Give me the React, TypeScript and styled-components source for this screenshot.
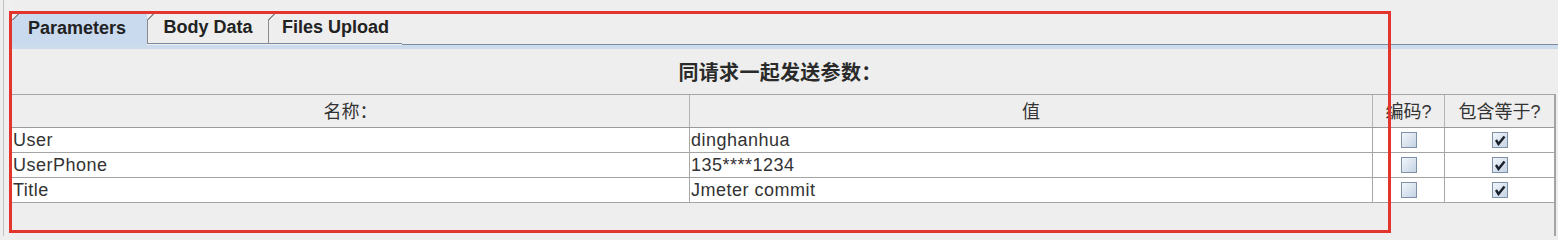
import React from 'react'
import styled, { createGlobalStyle } from 'styled-components'

const GlobalStyle = createGlobalStyle`
  html, body {
    margin: 0;
    padding: 0;
    background: #eeeeee;
  }
  body {
    font-family: "Liberation Sans", "Noto Sans CJK SC", sans-serif;
    color: #222;
  }
`

const columns = '678px 683px 72px 109px'

const Frame = styled.div`
  position: relative;
  width: 1558px;
  height: 236px;
  box-sizing: border-box;
  padding-left: 3px;
  display: flex;
  overflow: hidden;
  background: #eeeeee;
`
const Rail = styled.div`
  width: 8px;
  border-left: 1px solid #c2c2c2;
  background: #efefef;
`
const Panel = styled.div`
  flex: 1;
  display: flex;
  flex-direction: column;
  min-width: 0;
`
const TabStrip = styled.div`
  margin-top: 13px;
  height: 32px;
  display: flex;
  align-items: flex-start;
`
const Tab = styled.div<{ $active?: boolean; $width: number }>`
  position: relative;
  box-sizing: border-box;
  width: ${(p) => p.$width}px;
  height: ${(p) => (p.$active ? 32 : 31)}px;
  display: flex;
  align-items: center;
  justify-content: center;
  padding-right: ${(p) => (p.$active ? 6 : 0)}px;
  padding-bottom: 2px;
  font-size: 18px;
  font-weight: bold;
  color: #222;
  background: ${(p) => (p.$active ? '#c9daee' : '#eeeeee')};
  border-left: 1px solid ${(p) => (p.$active ? '#c9daee' : '#8c8c8c')};
  border-bottom: ${(p) => (p.$active ? 'none' : '1px solid #7b8aa0')};
  &::before {
    content: '';
    position: absolute;
    left: -1px;
    top: 0;
    width: 7px;
    height: 7px;
    background: linear-gradient(135deg, #eeeeee 0 46%, #8c8c8c 46% 58%, transparent 58%);
  }
  &:last-of-type {
    border-right: 1px solid #8c8c8c;
  }
`
const TabFill = styled.div`
  flex: 1;
  height: 31px;
  border-bottom: 1px solid #7b8aa0;
`
const ContentEdge = styled.div`
  height: 4px;
  background: #cddcec;
`
const TitleBand = styled.div`
  height: 45px;
  display: flex;
  align-items: center;
  justify-content: center;
  font-size: 20px;
  font-weight: bold;
  color: #2a2a2a;
  letter-spacing: 0.3px;
  padding-right: 10px;
`
const ScrollPane = styled.div`
  flex: 1;
  margin-right: 2px;
  border-right: 2px solid #a4a4a4;
  border-top: 1px solid #a6a6a6;
`
const HeaderRow = styled.div`
  display: grid;
  grid-template-columns: ${columns};
  height: 32px;
  border-bottom: 1px solid #9a9a9a;
  background: #eeeeee;
`
const HeaderCell = styled.div`
  display: flex;
  align-items: center;
  justify-content: center;
  font-size: 18px;
  color: #333;
  border-right: 1px solid #b4b4b4;
  padding-bottom: 2px;
  &:last-child {
    border-right: none;
  }
`
const Row = styled.div`
  display: grid;
  grid-template-columns: ${columns};
  height: 24px;
  background: #ffffff;
  border-bottom: 1px solid #a4a4a4;
`
const Cell = styled.div<{ $center?: boolean }>`
  display: flex;
  align-items: center;
  justify-content: ${(p) => (p.$center ? 'center' : 'flex-start')};
  padding-left: ${(p) => (p.$center ? 0 : 1)}px;
  font-size: 18px;
  letter-spacing: 0.5px;
  color: #333;
  border-right: 1px solid #a8a8a8;
  white-space: nowrap;
  overflow: hidden;
  &:last-child {
    border-right: none;
  }
`
const Box = styled.span`
  box-sizing: border-box;
  width: 16px;
  height: 16px;
  border: 1px solid #7f91a6;
  background: linear-gradient(135deg, #f2f6fb 0%, #c4d3e4 100%);
  display: flex;
  align-items: center;
  justify-content: center;
`
const Annotation = styled.div`
  position: absolute;
  left: 9px;
  top: 11px;
  width: 1382px;
  height: 222px;
  box-sizing: border-box;
  border: 3px solid #e2352d;
  pointer-events: none;
`

const Check = ({ checked }: { checked: boolean }) => (
  <Box>
    {checked && (
      <svg width="12" height="12" viewBox="0 0 12 12">
        <path d="M2 6 L4.5 10 L10.5 2.5" fill="none" stroke="#18212b" strokeWidth="2.4" strokeLinejoin="miter" />
      </svg>
    )}
  </Box>
)

const rows = [
  { name: 'User', value: 'dinghanhua' },
  { name: 'UserPhone', value: '135****1234' },
  { name: 'Title', value: 'Jmeter commit' },
]

export default function App(): React.ReactElement {
  return (
    <>
      <GlobalStyle />
      <Frame>
        <Rail />
        <Panel>
          <TabStrip>
            <Tab $active $width={135}>Parameters</Tab>
            <Tab $width={121}>Body Data</Tab>
            <Tab $width={134}>Files Upload</Tab>
            <TabFill />
          </TabStrip>
          <ContentEdge />
          <TitleBand>同请求一起发送参数：</TitleBand>
          <ScrollPane>
            <HeaderRow>
              <HeaderCell>名称：</HeaderCell>
              <HeaderCell>值</HeaderCell>
              <HeaderCell>编码?</HeaderCell>
              <HeaderCell>包含等于?</HeaderCell>
            </HeaderRow>
            {rows.map((r) => (
              <Row key={r.name}>
                <Cell>{r.name}</Cell>
                <Cell>{r.value}</Cell>
                <Cell $center>
                  <Check checked={false} />
                </Cell>
                <Cell $center>
                  <Check checked />
                </Cell>
              </Row>
            ))}
          </ScrollPane>
        </Panel>
        <Annotation />
      </Frame>
    </>
  )
}
